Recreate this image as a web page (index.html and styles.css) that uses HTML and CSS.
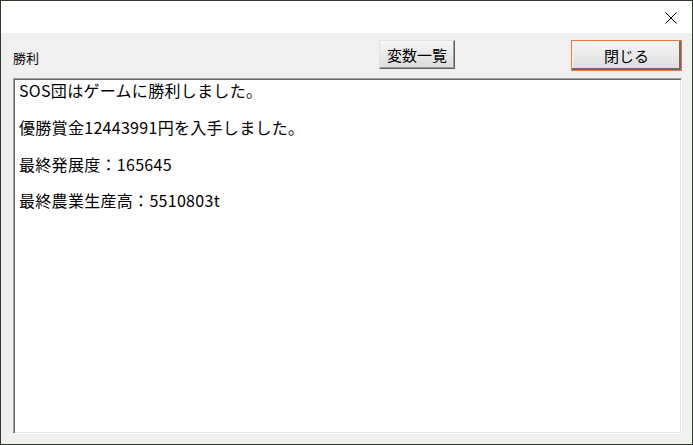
FILE: index.html
```html
<!DOCTYPE html>
<html lang="ja">
<head>
    <meta charset="UTF-8">
    <title>勝利</title>
    <link rel="stylesheet" href="styles.css">
</head>
<body>
    <div class="window">
        <div class="titlebar">
            <span class="close-x">
                <svg width="12" height="12" viewBox="0 0 12 12">
                    <path d="M0.5 0.5 L11.5 11.5 M11.5 0.5 L0.5 11.5" stroke="#000" stroke-width="1" fill="none"/>
                </svg>
            </span>
        </div>
        <div class="client">
            <div class="toolbar">
                <span class="label">勝利</span>
                <button class="btn btn-vars">変数一覧</button>
                <button class="btn btn-close">閉じる</button>
            </div>
            <div class="textbox">
                <div class="line">SOS団はゲームに勝利しました。</div>
                <div class="line blank"></div>
                <div class="line">優勝賞金12443991円を入手しました。</div>
                <div class="line blank"></div>
                <div class="line">最終発展度：165645</div>
                <div class="line blank"></div>
                <div class="line">最終農業生産高：5510803t</div>
            </div>
        </div>
    </div>
</body>
</html>
```

FILE: styles.css
```css
body {
    margin: 0;
    background: #2f3a2a;
    font-family: "Noto Sans CJK JP", "Noto Sans", sans-serif;
}
.window {
    width: 693px;
    height: 445px;
    box-sizing: border-box;
    border: 1px solid #2f3a2a;
    display: flex;
    flex-direction: column;
    background: #f0f0f0;
}
.titlebar {
    height: 32px;
    background: #fff;
    display: flex;
    justify-content: flex-end;
    align-items: center;
}
.close-x {
    display: flex;
    margin-right: 15px;
    margin-top: 2px;
}
.client {
    flex: 1;
    display: flex;
    flex-direction: column;
    padding: 7px 10px 10px 12px;
}
.toolbar {
    display: flex;
    align-items: flex-start;
    height: 31px;
}
.label {
    font-size: 13px;
    line-height: 14px;
    margin-top: 11px;
    color: #000;
    margin-right: auto;
}
.btn {
    font-family: "Noto Sans CJK JP", "Noto Sans", sans-serif;
    font-size: 15px;
    color: #000;
    padding: 0;
    background: linear-gradient(#f6f6f6, #dcdcdc);
    border: 1px solid;
    border-color: #e2e2e2 #5e5e5e #5e5e5e #e2e2e2;
    box-shadow: inset -1px -1px 0 #9a9a9a;
    line-height: 20px;
}
.btn-vars {
    width: 76px;
    height: 29px;
    margin-right: 116px;
}
.btn-close {
    width: 111px;
    height: 31px;
    border: 1px solid #e8783c;
    box-shadow: inset -2px -2px 0 #6a6a6a, inset 1px 1px 0 #f4f4f4;
}
.textbox {
    flex: 1;
    margin-top: 7px;
    background: #fff;
    border: 1px solid;
    border-color: #a0a0a0 #fff #fff #a0a0a0;
    box-shadow: inset 1px 1px 0 #696969, inset -1px -1px 0 #e3e3e3;
    padding: 2px 5px;
    font-size: 16px;
    line-height: 18.4px;
    letter-spacing: 0.3px;
    color: #000;
}
.line {
    height: 18.4px;
    white-space: nowrap;
}
```
